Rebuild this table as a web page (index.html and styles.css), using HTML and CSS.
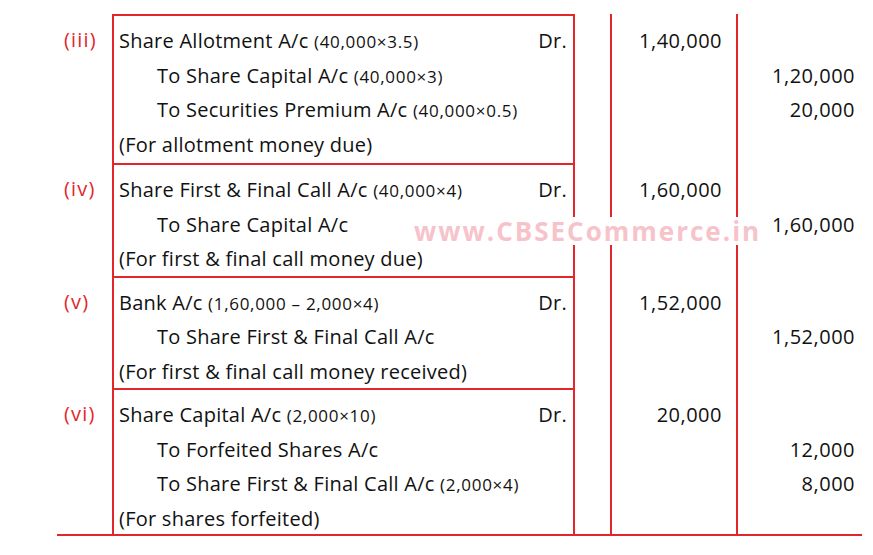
FILE: index.html
```html
<!DOCTYPE html>
<html>
<head>
<meta charset="utf-8">
<link rel="stylesheet" href="styles.css">
</head>
<body>
<div class="journal">
  <div class="entry four">
    <div class="no">(iii)</div>
    <div class="part">
      <div class="ln split"><span>Share Allotment A/c <small>(40,000×3.5)</small></span><span>Dr.</span></div>
      <div class="ln ind">To Share Capital A/c <small>(40,000×3)</small></div>
      <div class="ln ind">To Securities Premium A/c <small>(40,000×0.5)</small></div>
      <div class="ln">(For allotment money due)</div>
    </div>
    <div class="gap"></div>
    <div class="amt dr"><div class="ln">1,40,000</div></div>
    <div class="amt cr"><div class="ln"></div><div class="ln">1,20,000</div><div class="ln">20,000</div></div>
  </div>
  <div class="entry three">
    <div class="no">(iv)</div>
    <div class="part">
      <div class="ln split"><span>Share First &amp; Final Call A/c <small>(40,000×4)</small></span><span>Dr.</span></div>
      <div class="ln ind">To Share Capital A/c</div>
      <div class="ln">(For first &amp; final call money due)</div>
    </div>
    <div class="gap"></div>
    <div class="amt dr"><div class="ln">1,60,000</div></div>
    <div class="amt cr"><div class="ln"></div><div class="ln">1,60,000</div></div>
  </div>
  <div class="entry three">
    <div class="no">(v)</div>
    <div class="part">
      <div class="ln split"><span>Bank A/c <small>(1,60,000 – 2,000×4)</small></span><span>Dr.</span></div>
      <div class="ln ind">To Share First &amp; Final Call A/c</div>
      <div class="ln">(For first &amp; final call money received)</div>
    </div>
    <div class="gap"></div>
    <div class="amt dr"><div class="ln">1,52,000</div></div>
    <div class="amt cr"><div class="ln"></div><div class="ln">1,52,000</div></div>
  </div>
  <div class="entry last">
    <div class="no">(vi)</div>
    <div class="part">
      <div class="ln split"><span>Share Capital A/c <small>(2,000×10)</small></span><span>Dr.</span></div>
      <div class="ln ind">To Forfeited Shares A/c</div>
      <div class="ln ind">To Share First &amp; Final Call A/c <small>(2,000×4)</small></div>
      <div class="ln">(For shares forfeited)</div>
    </div>
    <div class="gap"></div>
    <div class="amt dr"><div class="ln">20,000</div></div>
    <div class="amt cr"><div class="ln"></div><div class="ln">12,000</div><div class="ln">8,000</div></div>
  </div>
  <div class="watermark">www.CBSECommerce.in</div>
</div>
</body>
</html>
```
FILE: styles.css
```css
html, body {
  margin: 0;
  padding: 0;
  background: #ffffff;
}
body {
  font-family: "Open Sans", "Liberation Sans", sans-serif;
  font-size: 20px;
  letter-spacing: 0.25px;
  color: #111111;
}
.journal {
  position: relative;
  margin: 14px 0 0 57px;
  width: 805px;
  border-bottom: 2px solid #e3262c;
}
.entry {
  display: grid;
  grid-template-columns: 55px 463px 35px 128px 124px;
}
.ln {
  height: 34.5px;
  line-height: 34.5px;
  white-space: nowrap;
}
.no {
  color: #e3262c;
  font-size: 20px;
  letter-spacing: 1.2px;
  padding: 9px 0 0 7px;
  line-height: 34.5px;
}
.part {
  border-left: 2px solid #e3262c;
  border-right: 2px solid #e3262c;
  border-top: 2px solid #e3262c;
  padding: 8px 6px 0 5px;
}
.entry.four .part {
  padding-bottom: 1px;
}
.entry.three .part .ln:last-child {
  height: 33.5px;
}
.entry.last .part .ln:last-child {
  height: 32.5px;
}
.split {
  display: flex;
  justify-content: space-between;
}
.ind {
  padding-left: 38px;
}
small {
  font-size: 17px;
  letter-spacing: 0.7px;
}
.amt {
  padding-top: 10px;
  text-align: right;
  letter-spacing: 0.5px;
}
.dr {
  border-left: 2px solid #e3262c;
  border-right: 2px solid #e3262c;
  padding-right: 14px;
}
.cr {
  padding-right: 7px;
}
.watermark {
  position: absolute;
  left: 355px;
  top: 203px;
  padding: 0 2px;
  background: #ffffff;
  color: #f7c3cb;
  font-family: "Open Sans", "Liberation Sans", sans-serif;
  font-weight: 700;
  font-size: 26px;
  letter-spacing: 2px;
  line-height: 28px;
}
```
